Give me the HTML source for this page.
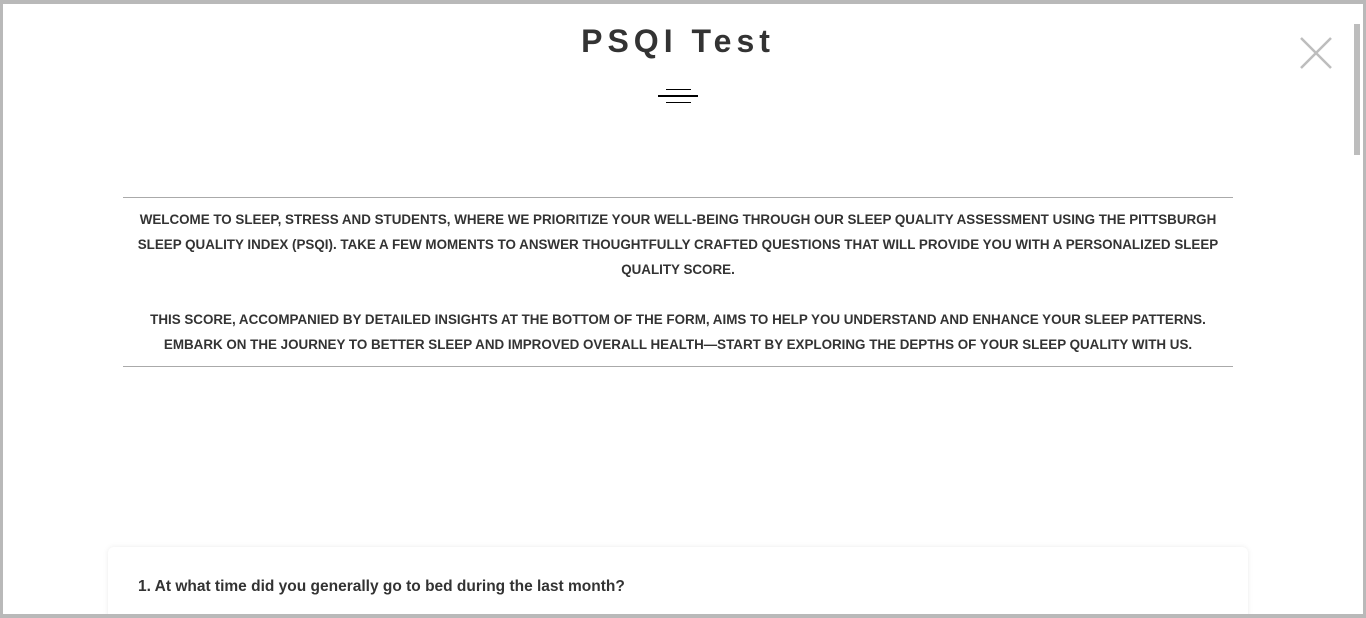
<!DOCTYPE html>
<html><head><style>
html,body{margin:0;padding:0;}
body{width:1366px;height:618px;overflow:hidden;background:#b9b9b9;position:relative;font-family:"Liberation Sans",sans-serif;}
.page{position:absolute;left:3px;top:4px;width:1360px;height:610px;background:#fff;overflow:hidden;}
h1{position:absolute;left:0;width:1350px;top:19px;margin:0;text-align:center;font-size:32px;font-weight:bold;letter-spacing:5px;color:#333;}
.ln{position:absolute;background:#000;}
.close{position:absolute;left:1296px;top:32px;}
.sb{position:absolute;left:1351px;top:20px;width:6px;height:131px;background:#bdbdbd;}
.intro{position:absolute;left:120px;top:193px;width:1110px;border-top:1px solid #aaa;border-bottom:1px solid #aaa;padding:9px 0 9px;text-align:center;font-size:13.4px;line-height:25px;color:#333;font-weight:bold;text-transform:uppercase;}
.intro p{margin:0;}
.card{position:absolute;left:105px;top:543px;width:1140px;height:100px;background:#fff;border-radius:6px;box-shadow:0 0 6px rgba(0,0,0,0.08);}
.q{position:absolute;left:30px;top:31px;font-size:15.5px;font-weight:bold;color:#333;}
</style></head><body>
<div class="page">
<h1>PSQI Test</h1>
<div class="ln" style="left:663px;top:85px;width:25px;height:1px"></div>
<div class="ln" style="left:655px;top:91px;width:40px;height:2px"></div>
<div class="ln" style="left:663px;top:98px;width:25px;height:1px"></div>
<svg class="close" width="34" height="34" viewBox="0 0 34 34"><path d="M2 2L32 32M32 2L2 32" stroke="#bdbdbd" stroke-width="2.5"/></svg>
<div class="sb"></div>
<div class="intro">
<p>Welcome to Sleep, Stress and Students, where we prioritize your well-being through our sleep quality assessment using the Pittsburgh Sleep Quality Index (PSQI). Take a few moments to answer thoughtfully crafted questions that will provide you with a personalized sleep quality score.</p>
<p>&nbsp;</p>
<p>This score, accompanied by detailed insights at the bottom of the form, aims to help you understand and enhance your sleep patterns. Embark on the journey to better sleep and improved overall health—start by exploring the depths of your sleep quality with us.</p>
</div>
<div class="card"><div class="q">1. At what time did you generally go to bed during the last month?</div></div>
</div>
</body></html>
